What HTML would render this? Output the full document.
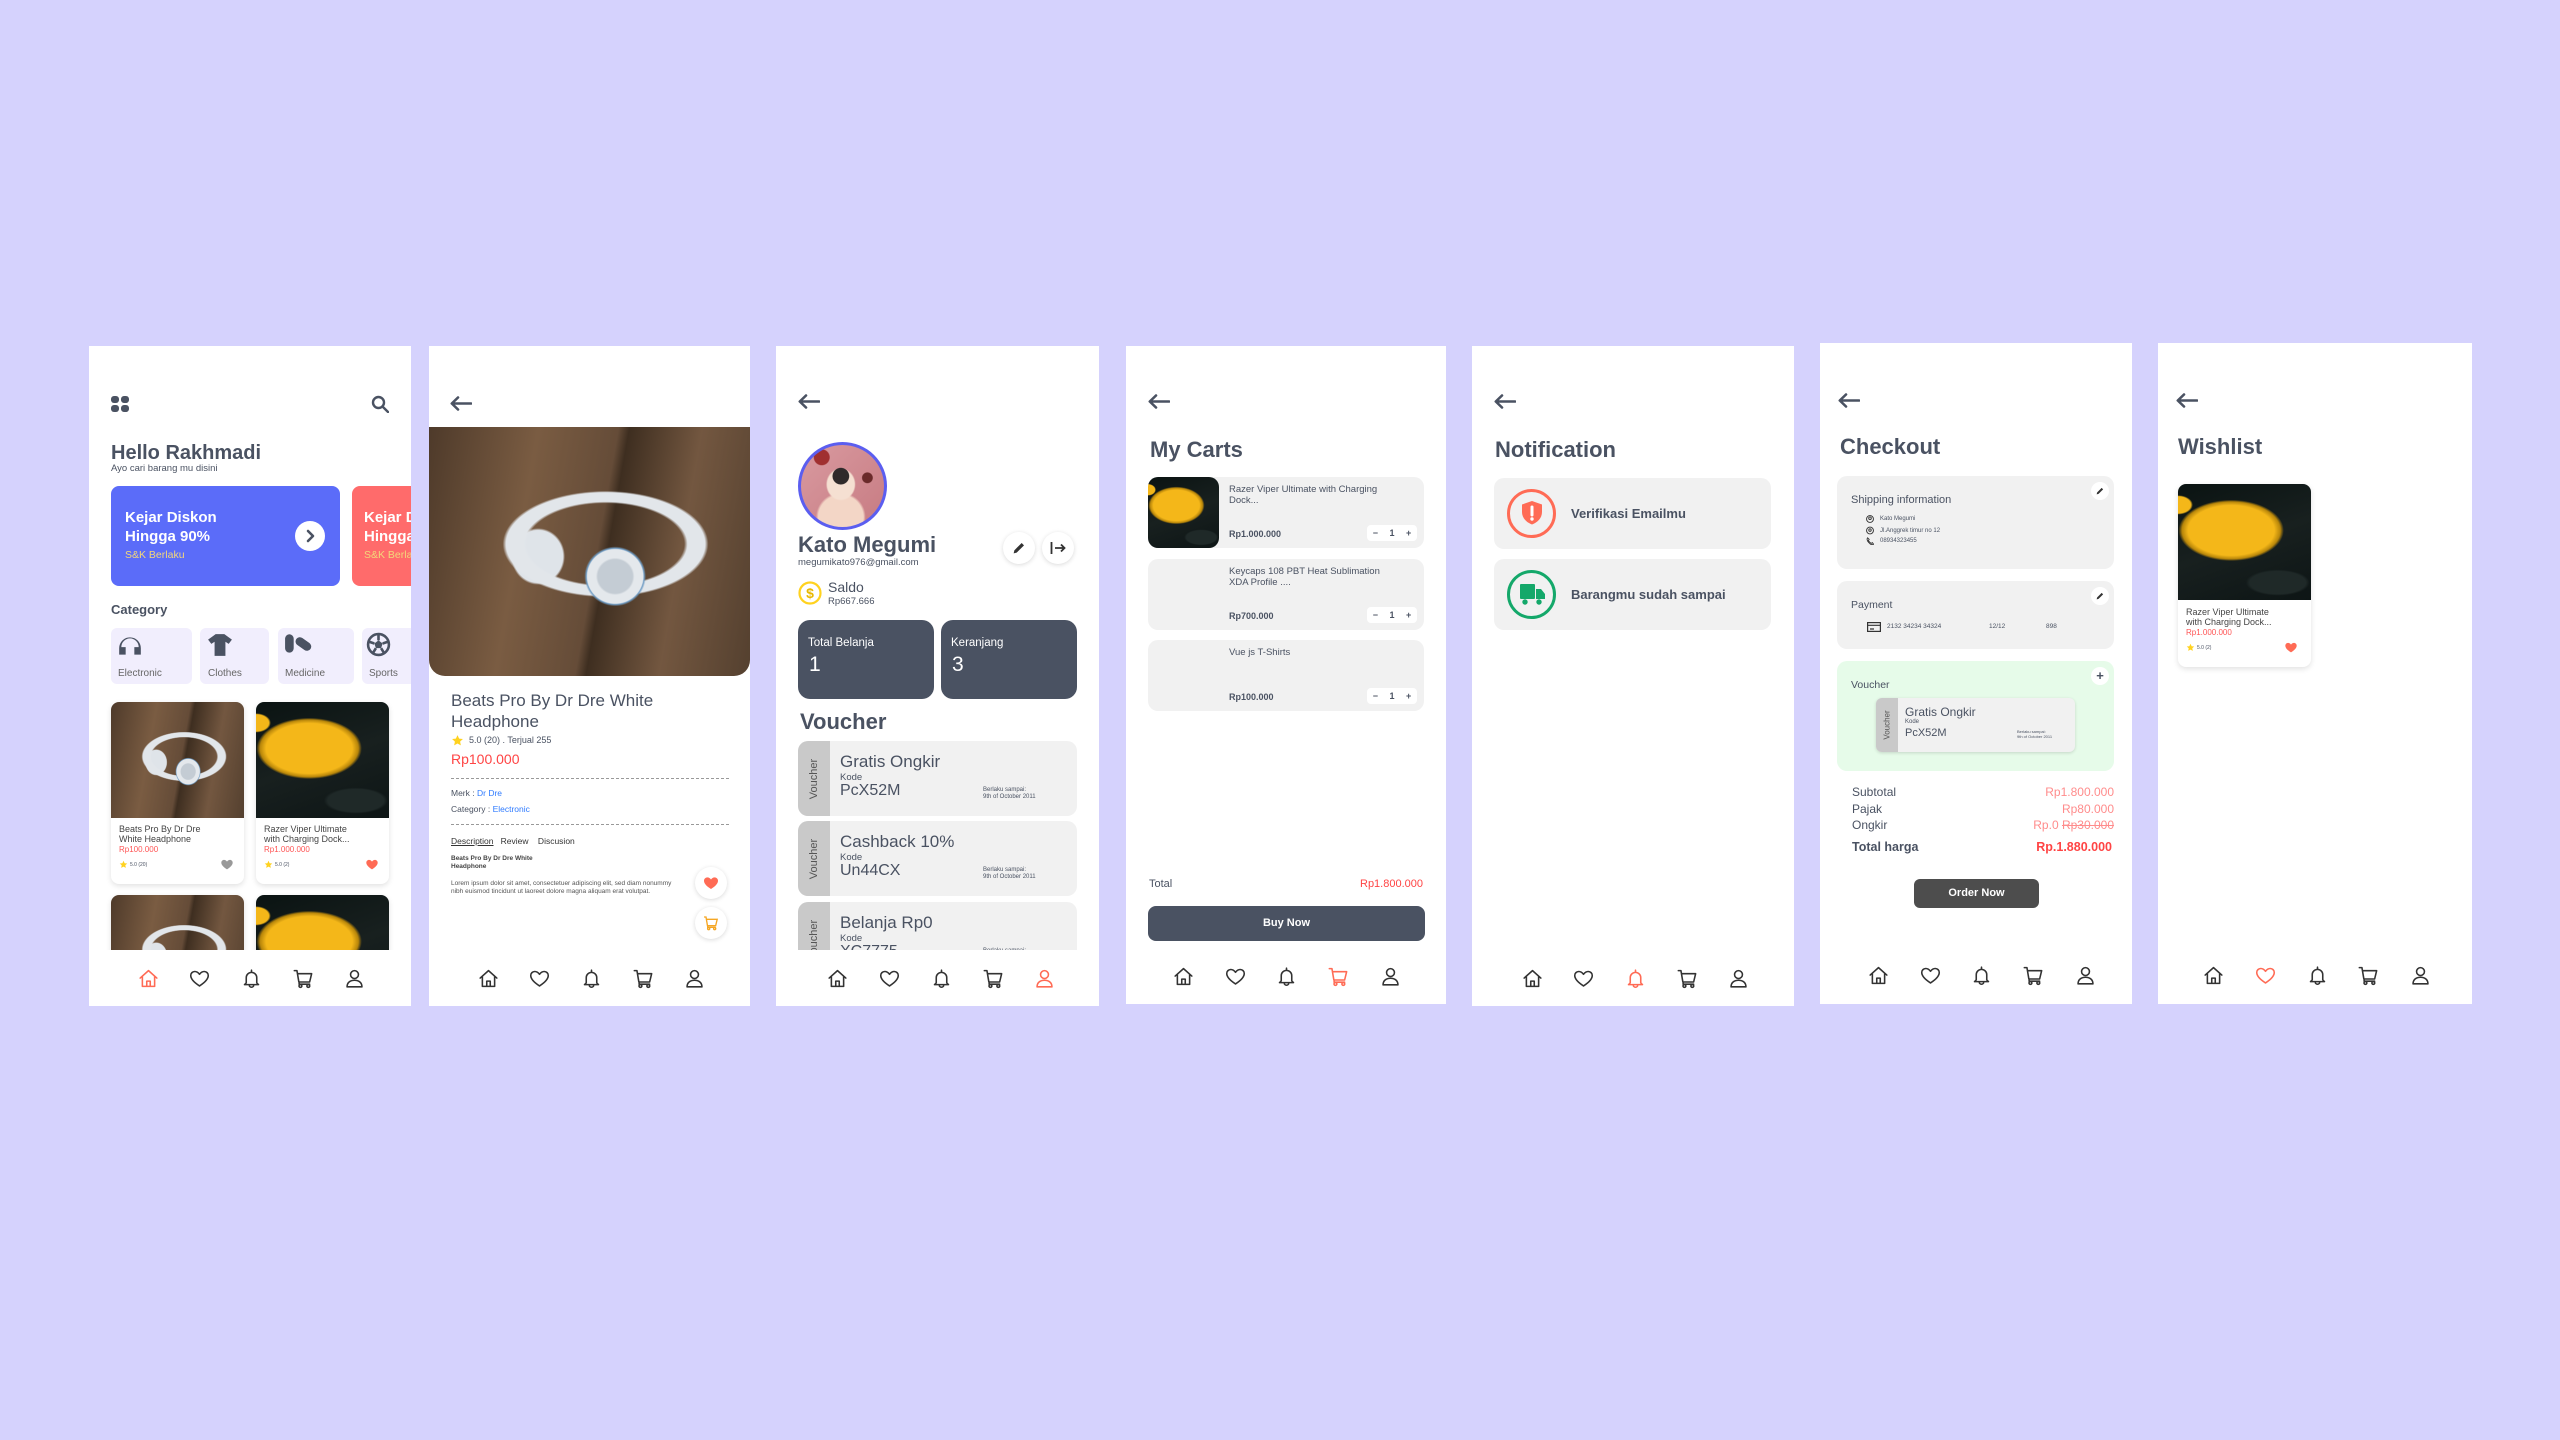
<!DOCTYPE html>
<html><head><meta charset="utf-8"><style>
*{margin:0;padding:0;box-sizing:border-box}
body{width:2560px;height:1440px;background:#d5d2fd;font-family:"Liberation Sans",sans-serif;color:#4a5262;position:relative;overflow:hidden}
.p{position:absolute;background:#fff;overflow:hidden}
.a{position:absolute}
.nav{position:absolute;left:0;right:0;bottom:0;height:56px;background:#fff}
.nav svg{position:absolute;top:18px;width:21px;height:21px;fill:none;stroke:#333;stroke-width:1.8;stroke-linejoin:round;stroke-linecap:round}
.nav svg.on{stroke:#ff6b55}
.hp{background:radial-gradient(ellipse 12% 15% at 58% 60%,#c4ccd4 0 45%,#e4e8ec 50% 72%,#6f9cc4 75%,transparent 80%),radial-gradient(ellipse 36% 24% at 55% 47%,transparent 0 68%,#e2e6ea 71% 86%,transparent 89%),radial-gradient(ellipse 11% 15% at 34% 52%,#dfe4e9 0 70%,transparent 76%),linear-gradient(100deg,#4e3a2a,#7a5c42 30%,#654c38 52%,#3e2e20 55%,#735740 75%,#54402f)}
.ms{background:radial-gradient(ellipse 45% 30% at 40% 40%,#f4b719 0 72%,#b8860a 82%,transparent 88%),radial-gradient(ellipse 16% 12% at 0% 18%,#f4b719 0 60%,transparent 70%),radial-gradient(ellipse 30% 14% at 75% 85%,#1f2928 0 70%,transparent 80%),linear-gradient(160deg,#0a1312,#18201f 50%,#0d1515)}
.back{position:absolute;width:22px;height:15px}
.h1{position:absolute;font-size:22px;font-weight:bold}
.card{position:absolute;background:#fff;border-radius:8px;box-shadow:0 2px 6px rgba(0,0,0,.12);overflow:hidden}
.vc{position:absolute;background:#f1f1f1;border-radius:10px;overflow:hidden}
.vs{position:absolute;left:0;top:0;bottom:0;width:32px;background:#c9c9c9}
.vs span{position:absolute;left:50%;top:50%;transform:translate(-50%,-50%) rotate(-90deg);font-size:11px;color:#555;white-space:nowrap}
.gray{position:absolute;background:#f1f1f1;border-radius:10px}
.qty{position:absolute;right:7px;bottom:7px;width:50px;height:16px;background:#fff;border-radius:4px;font-size:9px;display:flex;justify-content:space-around;align-items:center;font-weight:bold}
.ct{left:81px;top:7px;font-size:9.5px;line-height:11px;width:170px}
</style></head><body>
<svg width="0" height="0" style="position:absolute">
<defs>
<symbol id="home" viewBox="0 0 24 24"><path d="M2.5 11.5 12 3l9.5 8.5M5 9.5V21h14V9.5M10 21v-6h4v6"/></symbol>
<symbol id="heart" viewBox="0 0 24 24"><path d="M12 20.5C5 16 2 12.5 2 8.6 2 5.9 4.1 4 6.6 4c2.3 0 4 1.3 5.4 3.2C13.4 5.3 15.1 4 17.4 4 19.9 4 22 5.9 22 8.6c0 3.9-3 7.4-10 11.9z"/></symbol>
<symbol id="bell" viewBox="0 0 24 24"><path d="M12 2.5v1.5M6 17v-6a6 6 0 0 1 12 0v6l2 2H4zM9.5 19.5a2.5 2.5 0 0 0 5 0"/></symbol>
<symbol id="cart" viewBox="0 0 24 24"><path d="M1.5 3h3l2.2 13H19l2.3-9.5H5.4M7 16v2.5h12"/><circle cx="8.5" cy="20.5" r="1.6"/><circle cx="17.5" cy="20.5" r="1.6"/></symbol>
<symbol id="user" viewBox="0 0 24 24"><circle cx="12" cy="7.5" r="4.5"/><path d="M3.5 21.5c0-5 3.8-7.5 8.5-7.5s8.5 2.5 8.5 7.5z"/></symbol>
<symbol id="arr" viewBox="0 0 22 15"><path d="M21 7.5H2M8 1.5 1.8 7.5 8 13.5" fill="none" stroke="#4a5262" stroke-width="2.6" stroke-linecap="round" stroke-linejoin="round"/></symbol>
<symbol id="star" viewBox="0 0 24 24"><path d="M12 2l3 6.5 7 .8-5.2 4.8 1.4 7L12 17.6 5.8 21l1.4-7L2 9.3l7-.8z" fill="#ffd21f"/></symbol>
<symbol id="fheart" viewBox="0 0 24 24"><path d="M12 21C5 16.5 1.5 12.8 1.5 8.6 1.5 5.7 3.8 3.5 6.6 3.5c2.3 0 4 1.3 5.4 3.2 1.4-1.9 3.1-3.2 5.4-3.2 2.8 0 5.1 2.2 5.1 5.1 0 4.2-3.5 7.9-10.5 12.4z"/></symbol>
<symbol id="pen" viewBox="0 0 24 24"><path d="M4 20l1-4.5L16 4.5l3.5 3.5L8.5 19z" fill="#333"/></symbol>
</defs></svg>

<!-- PANEL 1 HOME -->
<div class="p" style="left:89px;top:346px;width:322px;height:660px">
 <svg class="a" style="left:22px;top:49px" width="18" height="18" viewBox="0 0 18 18" fill="#4a5262"><rect x="0" y="1" width="8" height="7" rx="3"/><rect x="10" y="1" width="8" height="7" rx="3"/><rect x="0" y="10" width="8" height="7" rx="3"/><rect x="10" y="10" width="8" height="7" rx="3"/></svg>
 <svg class="a" style="left:282px;top:49px" width="18" height="18" viewBox="0 0 18 18" fill="none" stroke="#4a5262" stroke-width="2.4" stroke-linecap="round"><circle cx="7.5" cy="7.5" r="5.5"/><path d="M12 12l5 5"/></svg>
 <div class="a" style="left:22px;top:96px;font-size:20px;font-weight:bold">Hello Rakhmadi</div>
 <div class="a" style="left:22px;top:117px;font-size:9.5px">Ayo cari barang mu disini</div>
 <div class="a" style="left:22px;top:140px;width:229px;height:100px;border-radius:8px;background:#5b6cf9">
  <div class="a" style="left:14px;top:22px;font-size:15px;line-height:19px;font-weight:bold;color:#fff">Kejar Diskon<br>Hingga 90%</div>
  <div class="a" style="left:14px;top:63px;font-size:10.5px;color:#f3d77a">S&amp;K Berlaku</div>
  <div class="a" style="left:184px;top:35px;width:30px;height:30px;border-radius:50%;background:#fff"><svg width="30" height="30" viewBox="0 0 30 30"><path d="M13 10l5 5-5 5" fill="none" stroke="#4a5262" stroke-width="2.6" stroke-linecap="round" stroke-linejoin="round"/></svg></div>
 </div>
 <div class="a" style="left:263px;top:140px;width:100px;height:100px;border-radius:8px;background:#ff6b6b;overflow:hidden">
  <div class="a" style="left:12px;top:22px;font-size:15px;line-height:19px;font-weight:bold;color:#fff;white-space:nowrap">Kejar Diskon<br>Hingga 90%</div>
  <div class="a" style="left:12px;top:63px;font-size:10.5px;color:#f3d77a;white-space:nowrap">S&amp;K Berlaku</div>
 </div>
 <div class="a" style="left:22px;top:256px;font-size:13px;font-weight:bold">Category</div>
 <div class="a" style="left:22px;top:282px;width:81px;height:56px;background:#f1eefd;border-radius:6px">
  <svg class="a" style="left:6px;top:5px" width="26" height="26" viewBox="0 0 24 24" fill="#4a5262"><path d="M2 14a10 10 0 0 1 20 0v6h-6v-7h4a8 8 0 0 0-16 0h4v7H2z"/></svg>
  <div class="a" style="left:7px;top:40px;font-size:10px;color:#666">Electronic</div></div>
 <div class="a" style="left:111px;top:282px;width:69px;height:56px;background:#f1eefd;border-radius:6px">
  <svg class="a" style="left:7px;top:5px" width="26" height="24" viewBox="0 0 24 22" fill="#4a5262"><path d="M8 1h8l7 5-3 4-3-2v13H7V8L4 10 1 6z"/></svg>
  <div class="a" style="left:8px;top:40px;font-size:10px;color:#666">Clothes</div></div>
 <div class="a" style="left:189px;top:282px;width:76px;height:56px;background:#f1eefd;border-radius:6px">
  <svg class="a" style="left:6px;top:5px" width="28" height="22" viewBox="0 0 26 20" fill="#4a5262"><rect x="1" y="1" width="8" height="17" rx="4"/><rect x="10" y="6" width="16" height="8" rx="4" transform="rotate(35 18 10)"/></svg>
  <div class="a" style="left:7px;top:40px;font-size:10px;color:#666">Medicine</div></div>
 <div class="a" style="left:273px;top:282px;width:60px;height:56px;background:#f1eefd;border-radius:6px">
  <svg class="a" style="left:4px;top:4px" width="25" height="25" viewBox="0 0 24 24"><circle cx="12" cy="12" r="10" fill="none" stroke="#4a5262" stroke-width="2.5"/><path d="M12 8l4 3-1.5 4.5h-5L8 11z" fill="#4a5262"/><path d="M12 2v6M16 11l6-2M14.5 15.5l3 5M9.5 15.5l-3 5M8 11L2 9" stroke="#4a5262" stroke-width="2.5"/></svg>
  <div class="a" style="left:7px;top:40px;font-size:10px;color:#666">Sports</div></div>
 <div class="card" style="left:22px;top:356px;width:133px;height:182px">
  <div class="hp" style="height:116px"></div>
  <div class="a" style="left:8px;top:122px;font-size:9px;line-height:10px;color:#444">Beats Pro By Dr Dre<br>White Headphone</div>
  <div class="a" style="left:8px;top:143px;font-size:8px;color:#f55">Rp100.000</div>
  <svg class="a" style="left:8px;top:158px" width="9" height="9"><use href="#star"/></svg>
  <div class="a" style="left:19px;top:160px;font-size:5px">5.0 (20)</div>
  <svg class="a" style="left:109px;top:156px" width="14" height="13" fill="#999"><use href="#fheart"/></svg>
 </div>
 <div class="card" style="left:167px;top:356px;width:133px;height:182px">
  <div class="ms" style="height:116px"></div>
  <div class="a" style="left:8px;top:122px;font-size:9px;line-height:10px;color:#444">Razer Viper Ultimate<br>with Charging Dock...</div>
  <div class="a" style="left:8px;top:143px;font-size:8px;color:#f55">Rp1.000.000</div>
  <svg class="a" style="left:8px;top:158px" width="9" height="9"><use href="#star"/></svg>
  <div class="a" style="left:19px;top:160px;font-size:5px">5.0 (2)</div>
  <svg class="a" style="left:109px;top:156px" width="14" height="13" fill="#ff6b55"><use href="#fheart"/></svg>
 </div>
 <div class="card" style="left:22px;top:549px;width:133px;height:100px"><div class="hp" style="height:116px"></div></div>
 <div class="card" style="left:167px;top:549px;width:133px;height:100px"><div class="ms" style="height:116px"></div></div>
 <div class="nav"><svg class="on" style="left:49px"><use href="#home"/></svg><svg style="left:100px"><use href="#heart"/></svg><svg style="left:152px"><use href="#bell"/></svg><svg style="left:204px"><use href="#cart"/></svg><svg style="left:255px"><use href="#user"/></svg></div>
</div>

<!-- PANEL 2 DETAIL -->
<div class="p" style="left:429px;top:346px;width:321px;height:660px">
 <svg class="back" style="left:21px;top:50px"><use href="#arr"/></svg>
 <div class="hp a" style="left:0;top:81px;width:321px;height:249px;border-radius:0 0 16px 16px"></div>
 <div class="a" style="left:22px;top:344px;font-size:17px;line-height:21px">Beats Pro By Dr Dre White<br>Headphone</div>
 <svg class="a" style="left:22px;top:388px" width="13" height="13"><use href="#star"/></svg>
 <div class="a" style="left:40px;top:389px;font-size:9px">5.0 (20) . Terjual 255</div>
 <div class="a" style="left:22px;top:405px;font-size:14px;color:#f44">Rp100.000</div>
 <div class="a" style="left:22px;top:432px;width:278px;border-top:1px dashed #999"></div>
 <div class="a" style="left:22px;top:442px;font-size:8.5px">Merk : <span style="color:#2f7bff">Dr Dre</span></div>
 <div class="a" style="left:22px;top:458px;font-size:8.5px">Category : <span style="color:#2f7bff">Electronic</span></div>
 <div class="a" style="left:22px;top:478px;width:278px;border-top:1px dashed #999"></div>
 <div class="a" style="left:22px;top:490px;font-size:8.5px;color:#333"><u>Description</u>&nbsp;&nbsp;&nbsp;Review&nbsp;&nbsp;&nbsp;&nbsp;Discusion</div>
 <div class="a" style="left:22px;top:509px;font-size:6.5px;line-height:8px;font-weight:bold;color:#444">Beats Pro By Dr Dre White<br>Headphone</div>
 <div class="a" style="left:22px;top:534px;width:225px;font-size:6.5px;line-height:7.5px;color:#555">Lorem ipsum dolor sit amet, consectetuer adipiscing elit, sed diam nonummy nibh euismod tincidunt ut laoreet dolore magna aliquam erat volutpat.</div>
 <div class="a" style="left:266px;top:521px;width:32px;height:32px;border-radius:50%;background:#fff;box-shadow:0 1px 5px rgba(0,0,0,.15)"><svg class="a" style="left:7px;top:8px" width="18" height="16" fill="#ff6b55"><use href="#fheart"/></svg></div>
 <div class="a" style="left:266px;top:561px;width:32px;height:32px;border-radius:50%;background:#fff;box-shadow:0 1px 5px rgba(0,0,0,.15)"><svg class="a" style="left:8px;top:8px;fill:none;stroke:#f5a623;stroke-width:2" width="16" height="16"><use href="#cart"/></svg></div>
 <div class="nav"><svg style="left:49px"><use href="#home"/></svg><svg style="left:100px"><use href="#heart"/></svg><svg style="left:152px"><use href="#bell"/></svg><svg style="left:204px"><use href="#cart"/></svg><svg style="left:255px"><use href="#user"/></svg></div>
</div>

<!-- PANEL 3 PROFILE -->
<div class="p" style="left:776px;top:346px;width:323px;height:660px">
 <svg class="back" style="left:22px;top:48px"><use href="#arr"/></svg>
 <div class="a" style="left:22px;top:96px;width:89px;height:88px;border-radius:50%;border:3px solid #5b5ef0;background:radial-gradient(circle at 48% 38%,#2f2a2a 0 12%,transparent 13%),radial-gradient(ellipse 18% 20% at 48% 48%,#f5e0d2 0 90%,transparent 100%),radial-gradient(ellipse 30% 30% at 48% 88%,#f3d6c6 0 90%,transparent 100%),radial-gradient(circle at 25% 15%,#a03030 0 8%,transparent 9%),radial-gradient(circle at 80% 40%,#6a2a2a 0 6%,transparent 7%),linear-gradient(135deg,#d99aa0,#c77b82)"></div>
 <div class="a" style="left:22px;top:186px;font-size:22px;font-weight:bold">Kato Megumi</div>
 <div class="a" style="left:22px;top:211px;font-size:9.5px">megumikato976@gmail.com</div>
 <div class="a" style="left:227px;top:186px;width:32px;height:32px;border-radius:50%;background:#fff;box-shadow:0 1px 5px rgba(0,0,0,.15)"><svg class="a" style="left:8px;top:8px" width="16" height="16"><use href="#pen"/></svg></div>
 <div class="a" style="left:266px;top:186px;width:32px;height:32px;border-radius:50%;background:#fff;box-shadow:0 1px 5px rgba(0,0,0,.15)"><svg class="a" style="left:8px;top:9px" width="16" height="14" viewBox="0 0 16 14" fill="none" stroke="#333" stroke-width="1.8"><path d="M1.5 1v12M5 7h10M11 3.5 14.5 7 11 10.5"/></svg></div>
 <svg class="a" style="left:22px;top:235px" width="24" height="24" viewBox="0 0 24 24"><circle cx="12" cy="12" r="10.5" fill="none" stroke="#ffd21f" stroke-width="2.2"/><text x="12" y="17" text-anchor="middle" font-size="14" font-weight="bold" fill="#e8b800" font-family="Liberation Sans">$</text></svg>
 <div class="a" style="left:52px;top:233px;font-size:14px">Saldo</div>
 <div class="a" style="left:52px;top:250px;font-size:9.5px">Rp667.666</div>
 <div class="a" style="left:22px;top:274px;width:136px;height:79px;border-radius:12px;background:#4a5262;color:#fff"><div class="a" style="left:10px;top:17px;font-size:11.5px">Total Belanja</div><div class="a" style="left:11px;top:33px;font-size:21px">1</div></div>
 <div class="a" style="left:165px;top:274px;width:136px;height:79px;border-radius:12px;background:#4a5262;color:#fff"><div class="a" style="left:10px;top:17px;font-size:11.5px">Keranjang</div><div class="a" style="left:11px;top:33px;font-size:21px">3</div></div>
 <div class="a" style="left:24px;top:363px;font-size:22px;font-weight:bold">Voucher</div>
 <div class="vc" style="left:22px;top:395px;width:279px;height:75px"><div class="vs"><span>Voucher</span></div><div class="a" style="left:42px;top:11px;font-size:17px">Gratis Ongkir</div><div class="a" style="left:42px;top:31px;font-size:9.5px">Kode</div><div class="a" style="left:42px;top:41px;font-size:16px">PcX52M</div><div class="a" style="left:185px;top:46px;font-size:6px;line-height:7px">Berlaku sampai:<br>9th of October 2011</div></div>
 <div class="vc" style="left:22px;top:475px;width:279px;height:75px"><div class="vs"><span>Voucher</span></div><div class="a" style="left:42px;top:11px;font-size:17px">Cashback 10%</div><div class="a" style="left:42px;top:31px;font-size:9.5px">Kode</div><div class="a" style="left:42px;top:41px;font-size:16px">Un44CX</div><div class="a" style="left:185px;top:46px;font-size:6px;line-height:7px">Berlaku sampai:<br>9th of October 2011</div></div>
 <div class="vc" style="left:22px;top:556px;width:279px;height:75px"><div class="vs"><span>Voucher</span></div><div class="a" style="left:42px;top:11px;font-size:17px">Belanja Rp0</div><div class="a" style="left:42px;top:31px;font-size:9.5px">Kode</div><div class="a" style="left:42px;top:41px;font-size:16px">XC7775</div><div class="a" style="left:185px;top:46px;font-size:6px;line-height:7px">Berlaku sampai:<br>9th of October 2011</div></div>
 <div class="nav"><svg style="left:51px"><use href="#home"/></svg><svg style="left:103px"><use href="#heart"/></svg><svg style="left:155px"><use href="#bell"/></svg><svg style="left:207px"><use href="#cart"/></svg><svg class="on" style="left:258px"><use href="#user"/></svg></div>
</div>

<!-- PANEL 4 CART -->
<div class="p" style="left:1126px;top:346px;width:320px;height:658px">
 <svg class="back" style="left:22px;top:48px"><use href="#arr"/></svg>
 <div class="h1" style="left:24px;top:91px">My Carts</div>
 <div class="gray" style="left:22px;top:131px;width:276px;height:71px"><div class="ms a" style="left:0;top:0;width:71px;height:71px;border-radius:10px"></div><div class="a ct">Razer Viper Ultimate with Charging Dock...</div><div class="a" style="left:81px;top:52px;font-size:9px;font-weight:bold">Rp1.000.000</div><div class="qty"><span>−</span><span>1</span><span>+</span></div></div>
 <div class="gray" style="left:22px;top:213px;width:276px;height:71px"><div class="a ct">Keycaps 108 PBT Heat Sublimation XDA Profile ....</div><div class="a" style="left:81px;top:52px;font-size:9px;font-weight:bold">Rp700.000</div><div class="qty"><span>−</span><span>1</span><span>+</span></div></div>
 <div class="gray" style="left:22px;top:294px;width:276px;height:71px"><div class="a ct">Vue js T-Shirts</div><div class="a" style="left:81px;top:52px;font-size:9px;font-weight:bold">Rp100.000</div><div class="qty"><span>−</span><span>1</span><span>+</span></div></div>
 <div class="a" style="left:23px;top:532px;font-size:11px">Total</div>
 <div class="a" style="right:23px;top:532px;font-size:11px;color:#f44">Rp1.800.000</div>
 <div class="a" style="left:22px;top:560px;width:277px;height:35px;border-radius:8px;background:#4a5262;color:#fff;font-size:11px;font-weight:bold;text-align:center;line-height:35px">Buy Now</div>
 <div class="nav"><svg style="left:47px"><use href="#home"/></svg><svg style="left:99px"><use href="#heart"/></svg><svg style="left:150px"><use href="#bell"/></svg><svg class="on" style="left:202px"><use href="#cart"/></svg><svg style="left:254px"><use href="#user"/></svg></div>
</div>

<!-- PANEL 5 NOTIFICATION -->
<div class="p" style="left:1472px;top:346px;width:322px;height:660px">
 <svg class="back" style="left:22px;top:48px"><use href="#arr"/></svg>
 <div class="h1" style="left:23px;top:91px">Notification</div>
 <div class="gray" style="left:22px;top:132px;width:277px;height:71px"><div class="a" style="left:13px;top:11px;width:49px;height:49px;border-radius:50%;border:3px solid #ff6b55"><svg class="a" style="left:10px;top:8px" width="24" height="26" viewBox="0 0 24 26"><path d="M12 1 22 4.5V12c0 6-4.5 10.5-10 12.5C6.5 22.5 2 18 2 12V4.5z" fill="#ff6b55"/><path d="M12 7v8" stroke="#fff" stroke-width="3" stroke-linecap="round"/><circle cx="12" cy="19" r="1.7" fill="#fff"/></svg></div><div class="a" style="left:77px;top:28px;font-size:13px;font-weight:bold">Verifikasi Emailmu</div></div>
 <div class="gray" style="left:22px;top:213px;width:277px;height:71px"><div class="a" style="left:13px;top:11px;width:49px;height:49px;border-radius:50%;border:3px solid #14a86a"><svg class="a" style="left:10px;top:11px" width="26" height="22" viewBox="0 0 26 22" fill="#14a86a"><rect x="0" y="0" width="15" height="15" rx="1"/><path d="M16 5h5l4 5v5h-9z"/><circle cx="5" cy="18" r="2.7"/><circle cx="19" cy="18" r="2.7"/></svg></div><div class="a" style="left:77px;top:28px;font-size:13px;font-weight:bold">Barangmu sudah sampai</div></div>
 <div class="nav"><svg style="left:50px"><use href="#home"/></svg><svg style="left:101px"><use href="#heart"/></svg><svg class="on" style="left:153px"><use href="#bell"/></svg><svg style="left:205px"><use href="#cart"/></svg><svg style="left:256px"><use href="#user"/></svg></div>
</div>

<!-- PANEL 6 CHECKOUT -->
<div class="p" style="left:1820px;top:343px;width:312px;height:661px">
 <svg class="back" style="left:18px;top:50px"><use href="#arr"/></svg>
 <div class="h1" style="left:20px;top:91px">Checkout</div>
 <div class="gray" style="left:17px;top:133px;width:277px;height:93px">
  <div class="a" style="left:254px;top:6px;width:18px;height:18px;border-radius:50%;background:#fff"><svg class="a" style="left:4px;top:4px" width="10" height="10"><use href="#pen"/></svg></div>
  <div class="a" style="left:14px;top:18px;font-size:11px">Shipping information</div>
  <svg class="a" style="left:29px;top:39px" width="8" height="8" viewBox="0 0 10 10" fill="none" stroke="#333" stroke-width="1.2"><circle cx="5" cy="5" r="4.3"/><circle cx="5" cy="4" r="1.6"/></svg><div class="a" style="left:43px;top:40px;font-size:6px">Kato Megumi</div>
  <svg class="a" style="left:29px;top:50px" width="8" height="9" viewBox="0 0 10 10" fill="none" stroke="#333" stroke-width="1.2"><circle cx="5" cy="5" r="4.3"/><circle cx="5" cy="4.5" r="1.5"/></svg><div class="a" style="left:43px;top:52px;font-size:6px">Jl.Anggrek timur no 12</div>
  <svg class="a" style="left:29px;top:61px" width="8" height="8" viewBox="0 0 10 10" fill="none" stroke="#333" stroke-width="1.1"><path d="M2 1l2 2-1 1.5c1 1.5 2 2.5 3.5 3.5L8 7l1.5 2C8 10 6 10 3.5 7 1 4.5 1 2 2 1z"/></svg><div class="a" style="left:43px;top:62px;font-size:6px">08934323455</div>
 </div>
 <div class="gray" style="left:17px;top:238px;width:277px;height:68px">
  <div class="a" style="left:254px;top:6px;width:18px;height:18px;border-radius:50%;background:#fff"><svg class="a" style="left:4px;top:4px" width="10" height="10"><use href="#pen"/></svg></div>
  <div class="a" style="left:14px;top:18px;font-size:10.5px">Payment</div>
  <svg class="a" style="left:30px;top:41px" width="14" height="10" viewBox="0 0 14 10" fill="none" stroke="#333" stroke-width="1.2"><rect x=".6" y=".6" width="12.8" height="8.8"/><path d="M.6 3.3h12.8M3 7h4"/></svg>
  <div class="a" style="left:50px;top:42px;font-size:6.5px">2132 34234 34324</div>
  <div class="a" style="left:152px;top:42px;font-size:6.5px">12/12</div>
  <div class="a" style="left:209px;top:42px;font-size:6.5px">898</div>
 </div>
 <div class="a" style="left:17px;top:318px;width:277px;height:110px;border-radius:10px;background:#e6fbe9">
  <div class="a" style="left:254px;top:6px;width:18px;height:18px;border-radius:50%;background:#fff;text-align:center;font-size:13px;line-height:18px;font-weight:bold">+</div>
  <div class="a" style="left:14px;top:18px;font-size:10.5px">Voucher</div>
  <div class="vc" style="left:39px;top:37px;width:199px;height:54px;border-radius:6px;box-shadow:0 1px 3px rgba(0,0,0,.15)"><div class="vs" style="width:22px"><span style="font-size:8px">Voucher</span></div><div class="a" style="left:29px;top:7px;font-size:12px">Gratis Ongkir</div><div class="a" style="left:29px;top:21px;font-size:6px">Kode</div><div class="a" style="left:29px;top:29px;font-size:11px">PcX52M</div><div class="a" style="left:141px;top:31px;font-size:4px;line-height:5px">Berlaku sampai:<br>9th of October 2011</div></div>
 </div>
 <div class="a" style="left:32px;top:441px;font-size:12px;line-height:16.5px">Subtotal<br>Pajak<br>Ongkir</div>
 <div class="a" style="right:18px;top:441px;font-size:12px;line-height:16.5px;text-align:right;color:#ff8c8c">Rp1.800.000<br>Rp80.000<br>Rp.0 <s>Rp30.000</s></div>
 <div class="a" style="left:32px;top:497px;font-size:12.5px;font-weight:bold">Total harga</div>
 <div class="a" style="right:20px;top:497px;font-size:12.5px;font-weight:bold;color:#f44">Rp.1.880.000</div>
 <div class="a" style="left:94px;top:536px;width:125px;height:29px;border-radius:6px;background:#4d4d4d;color:#fff;font-size:11px;font-weight:bold;text-align:center;line-height:29px">Order Now</div>
 <div class="nav" style="bottom:1px"><svg style="left:48px"><use href="#home"/></svg><svg style="left:100px"><use href="#heart"/></svg><svg style="left:151px"><use href="#bell"/></svg><svg style="left:203px"><use href="#cart"/></svg><svg style="left:255px"><use href="#user"/></svg></div>
</div>

<!-- PANEL 7 WISHLIST -->
<div class="p" style="left:2158px;top:343px;width:314px;height:661px">
 <svg class="back" style="left:18px;top:50px"><use href="#arr"/></svg>
 <div class="h1" style="left:20px;top:91px">Wishlist</div>
 <div class="card" style="left:20px;top:141px;width:133px;height:183px">
  <div class="ms" style="height:116px"></div>
  <div class="a" style="left:8px;top:123px;font-size:9px;line-height:10px;color:#444">Razer Viper Ultimate<br>with Charging Dock...</div>
  <div class="a" style="left:8px;top:144px;font-size:8px;color:#f55">Rp1.000.000</div>
  <svg class="a" style="left:8px;top:159px" width="9" height="9"><use href="#star"/></svg>
  <div class="a" style="left:19px;top:161px;font-size:5px">5.0 (2)</div>
  <svg class="a" style="left:106px;top:157px" width="14" height="13" fill="#ff6b55"><use href="#fheart"/></svg>
 </div>
 <div class="nav" style="bottom:1px"><svg style="left:45px"><use href="#home"/></svg><svg class="on" style="left:97px"><use href="#heart"/></svg><svg style="left:149px"><use href="#bell"/></svg><svg style="left:200px"><use href="#cart"/></svg><svg style="left:252px"><use href="#user"/></svg></div>
</div>
</body></html>
